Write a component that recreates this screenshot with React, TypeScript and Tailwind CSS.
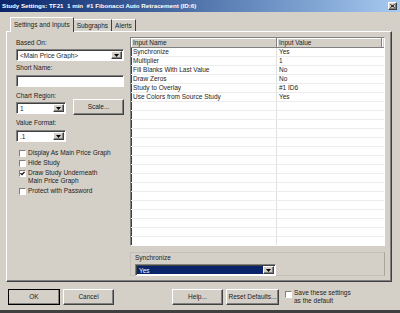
import type { ReactNode } from "react";

const raised = "border border-t-white border-l-white border-r-[#404040] border-b-[#404040] shadow-[inset_-1px_-1px_0_#808080]";
const sunken = "border border-t-[#808080] border-l-[#808080] border-r-white border-b-white shadow-[inset_1px_1px_0_#404040]";

const Arrow = () => (
    <div className={`w-[11px] h-full bg-[#d4d0c8] flex items-center justify-center ${raised}`}>
        <svg width="5" height="3" viewBox="0 0 5 3"><polygon points="0,0 5,0 2.5,3" fill="#000" /></svg>
    </div>
);

const Select = ({ value, className }: { value: string; className: string }) => (
    <div className={`flex h-[12px] bg-white p-[1px] ${sunken} ${className}`}>
        <span className="flex-1 pl-[2px] leading-[9px] truncate">{value}</span>
        <Arrow />
    </div>
);

const Button = ({ children, className }: { children: ReactNode; className: string }) => (
    <div className={`h-[16px] flex items-center justify-center bg-[#d4d0c8] ${raised} ${className}`}>{children}</div>
);

const Check = ({ checked }: { checked?: boolean }) => (
    <div className="w-[7px] h-[7px] bg-white shrink-0 flex items-center justify-center border border-t-[#808080] border-l-[#808080] border-r-white border-b-white">
        {checked && (
            <svg width="5" height="5" viewBox="0 0 5 5"><polyline points="0.5,2.2 2,3.7 4.5,0.8" fill="none" stroke="#000" strokeWidth="1.2" /></svg>
        )}
    </div>
);

const inputs = [
    ["Synchronize", "Yes"],
    ["Multiplier", "1"],
    ["Fill Blanks With Last Value", "No"],
    ["Draw Zeros", "No"],
    ["Study to Overlay", "#1 ID6"],
    ["Use Colors from Source Study", "Yes"],
];

const rows = [...inputs, ...Array.from({ length: 16 }, () => ["", ""])];

export default function App() {
    return (
        <div className="w-[400px] h-[313px] bg-[#d4d0c8] flex flex-col font-['Liberation_Sans',Arial,sans-serif] text-[6.5px] leading-[8px] text-[#1c1c1c] overflow-hidden">
            <div className="h-[12px] shrink-0 flex items-center bg-gradient-to-r from-[#0a246a] to-[#a6caf0] px-[2px]">
                <span className="flex-1 text-white font-bold text-[6.2px] whitespace-pre">Study Settings: TF21  1 min  #1 Fibonacci Auto Retracement (ID:6)</span>
                <div className={`w-[9px] h-[8px] bg-[#d4d0c8] flex items-center justify-center mr-[1px] ${raised}`}>
                    <svg width="5" height="4" viewBox="0 0 5 4"><path d="M0.5 0.5 L4.5 3.5 M4.5 0.5 L0.5 3.5" stroke="#000" strokeWidth="1" /></svg>
                </div>
            </div>

            <div className="flex ml-[10px] mt-[5px] h-[14px] items-end relative z-10">
                <div className="h-[15px] px-[3px] flex items-center bg-[#d4d0c8] border border-b-0 border-t-white border-l-white border-r-[#404040] -mb-[1px]">Settings and Inputs</div>
                <div className="h-[12px] px-[3px] flex items-center border border-b-0 border-t-white border-l-0 border-r-[#404040]">Subgraphs</div>
                <div className="h-[12px] px-[3px] flex items-center border border-b-0 border-t-white border-l-0 border-r-[#404040]">Alerts</div>
            </div>

            <div className="ml-[6px] mr-[8px] h-[251px] border border-t-white border-l-white border-r-[#404040] border-b-[#404040] shadow-[inset_-1px_-1px_0_#808080] flex pt-[5px] pl-[9px] pr-[6px]">
                <div className="w-[108px] flex flex-col">
                    <div className="mt-[2px]">Based On:</div>
                    <Select value="<Main Price Graph>" className="mt-[2px] w-[108px]" />
                    <div className="mt-[3px]">Short Name:</div>
                    <div className={`mt-[3px] h-[12px] bg-white ${sunken}`} />
                    <div className="flex items-end gap-[7px] mt-[-1px]">
                        <div className="flex flex-col">
                            <div className="mt-[6px]">Chart Region:</div>
                            <Select value="1" className="mt-[2px] w-[50px]" />
                        </div>
                        <Button className="w-[52px] mb-[-1px]">Scale...</Button>
                    </div>
                    <div className="mt-[5px]">Value Format:</div>
                    <Select value=".1" className="mt-[3px] w-[50px]" />
                    <div className="mt-[7px] ml-[3px] flex flex-col gap-[2px]">
                        <div className="flex items-center gap-[2px]"><Check /><span>Display As Main Price Graph</span></div>
                        <div className="flex items-center gap-[2px]"><Check /><span>Hide Study</span></div>
                        <div className="flex items-start gap-[2px]"><div className="mt-[1px]"><Check checked /></div><span>Draw Study Underneath<br />Main Price Graph</span></div>
                        <div className="flex items-center gap-[2px]"><Check /><span>Protect with Password</span></div>
                    </div>
                </div>

                <div className="flex-1 ml-[6px] flex flex-col">
                    <div className={`h-[209px] bg-white overflow-hidden ${sunken}`}>
                        <div className="flex h-[10px] bg-[#d4d0c8] border-b border-[#808080]">
                            <div className="w-[146px] pl-[2px] flex items-center border-r border-[#808080] shadow-[inset_1px_1px_0_white]">Input Name</div>
                            <div className="w-[105px] pl-[2px] flex items-center border-r border-[#808080] shadow-[inset_1px_1px_0_white]">Input Value</div>
                            <div className="flex-1 shadow-[inset_1px_1px_0_white]" />
                        </div>
                        {rows.map(([name, value], i) => (
                            <div key={i} className="flex h-[9px] border-b border-[#ececec]">
                                <div className="w-[146px] pl-[2px] flex items-center border-r border-[#e0e0e0]">{name}</div>
                                <div className="w-[105px] pl-[2px] flex items-center">{value}</div>
                            </div>
                        ))}
                    </div>
                    <div className="mt-[6px] h-[24px] border border-[#c4c0b8] border-r-[#a8a49c] pl-[4px] flex flex-col">
                        <div className="mt-[1px]">Synchronize</div>
                        <div className={`mt-[2px] w-[141px] h-[12px] flex bg-white p-[1px] ${sunken}`}>
                            <span className="flex-1 pl-[2px] leading-[9px] bg-[#0a246a] text-white">Yes</span>
                            <Arrow />
                        </div>
                    </div>
                </div>
            </div>

            <div className="flex items-center mt-[7px] ml-[8px] h-[16px]">
                <Button className="w-[52px] outline outline-1 outline-black -outline-offset-1">OK</Button>
                <Button className="w-[51px] ml-[3px]">Cancel</Button>
                <Button className="w-[51px] ml-[58px]">Help...</Button>
                <Button className="w-[53px] ml-[3px]">Reset Defaults...</Button>
                <div className="ml-[6px] flex items-start gap-[2px]">
                    <div className="mt-[2px]"><Check /></div>
                    <span>Save these settings<br />as the default</span>
                </div>
            </div>
            <div className="mt-auto h-[3px] bg-[#404040]" />
        </div>
    );
}
